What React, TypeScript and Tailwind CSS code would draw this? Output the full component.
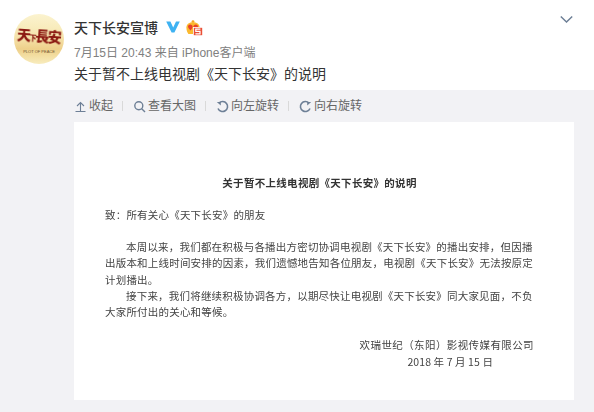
const Cjk = '[font-family:"Liberation_Sans","Noto_Sans_CJK_SC",sans-serif]';

function Avatar() {
  return (
    <div className="relative w-[50px] h-[50px] rounded-full overflow-hidden shrink-0 bg-[linear-gradient(180deg,#fbf3cf_0%,#f8ecbc_28%,#f3dca0_55%,#eed08a_70%,#f3dea2_84%,#f8ecbe_100%)] flex flex-col items-center">
      <div className="mt-[14px] font-['Noto_Sans_CJK_SC',sans-serif] font-black text-[14px] leading-[15px] text-[#8c1a12] tracking-[-1.4px] whitespace-nowrap rotate-[4deg] blur-[0.3px]">
        天<span className="text-[7px]">下</span>長安
      </div>
      <div className="font-['Liberation_Sans',sans-serif] text-[4px] leading-[5px] text-[#6f5430] mt-[3px] whitespace-nowrap">PLOT OF PEACE</div>
    </div>
  );
}

function VBadge() {
  return (
    <svg width="14" height="12" viewBox="0 0 14 12" className="shrink-0">
      <path d="M0.2 0.4 H4.4 L7.2 6.6 L10 0.4 H13.8 L8.4 11.6 H5.6 Z" fill="#3eb2f2" />
    </svg>
  );
}

function Crown() {
  return (
    <svg width="17" height="16" viewBox="0 0 17 16" className="shrink-0">
      <circle cx="7" cy="1.6" r="1.4" fill="#f5a623" />
      <path d="M7 2.2 C10.5 2.2 13.6 4 13.6 7.4 C13.6 10 13 12 12 14 H2.4 C1 12 0.4 10 0.4 7.4 C0.4 4 3.5 2.2 7 2.2 Z" fill="#fbb92f" />
      <path d="M4.2 4.4 C2.8 4.4 2 5.4 2 6.6 C2 8 3.4 9.4 4.6 10.4 C5.6 9.4 6.6 8 6.6 6.6 C6.6 5.4 5.6 4.4 4.2 4.4 Z" fill="#e8402c" />
      <path d="M9.8 4.4 C8.4 4.4 7.4 5.4 7.4 6.6 C7.4 8 8.4 9.4 9.4 10.4 C10.6 9.4 12 8 12 6.6 C12 5.4 11.2 4.4 9.8 4.4 Z" fill="#e8402c" />
      <rect x="7" y="7" width="10" height="9" fill="#fff" />
      <rect x="7.8" y="7.8" width="8.4" height="7.4" fill="#ea4f36" />
      <path d="M14.4 9.2 H9.8 V11.3 H14 V13.8 H9.4" fill="none" stroke="#fff" strokeWidth="1.2" />
    </svg>
  );
}

function Sep() {
  return <span className="w-px h-[10px] bg-[#d9d9d9] ml-[9px] mr-[10px]" />;
}

function ToolItem({ icon, label }: { icon: React.ReactNode; label: string }) {
  return (
    <div className="flex items-center gap-[2px] text-[12px] text-[#666]">
      {icon}
      <span>{label}</span>
    </div>
  );
}

const stroke = { fill: "none", stroke: "#6d7f96", strokeWidth: 1.4 };

export default function App() {
  return (
    <div className={`w-[594px] h-[412px] overflow-hidden bg-white ${Cjk}`}>
      <div className="h-[90px] flex pl-[14px] pr-[21px] pt-[14px]">
        <Avatar />
        <div className="ml-[10px] flex-1 flex flex-col">
          <div className="flex items-center h-[20px] mt-[4px]">
            <span className="text-[14px] font-medium text-[#333] leading-[20px]">天下长安宣博</span>
            <span className="ml-[8px] -mt-[2px]"><VBadge /></span>
            <span className="ml-[6px] -mt-[1px]"><Crown /></span>
          </div>
          <div className="mt-[7px] text-[12px] leading-[17px] text-[#808080]">7月15日 20:43 来自 iPhone客户端</div>
          <div className="mt-[2px] text-[14px] leading-[20px] text-[#333]">关于暂不上线电视剧《天下长安》的说明</div>
        </div>
        <svg width="13" height="9" viewBox="0 0 13 9" className="mt-[1px] shrink-0">
          <path d="M0.8 1.5 L6.5 7 L12.2 1.5" fill="none" stroke="#6d7f96" strokeWidth="1.5" />
        </svg>
      </div>
      <div className="h-[322px] bg-[#f2f2f5] pl-[74px] pr-[20px]">
        <div className="h-[32px] flex items-center">
          <ToolItem
            label="收起"
            icon={
              <svg width="13" height="13" viewBox="0 0 13 13">
                <path d="M6.5 11 V3 M3 6 L6.5 2.5 L10 6 M1.5 11.5 H11.5" {...stroke} strokeWidth={1.1} />
              </svg>
            }
          />
          <Sep />
          <ToolItem
            label="查看大图"
            icon={
              <svg width="13" height="13" viewBox="0 0 13 13">
                <circle cx="5.8" cy="5.8" r="4" {...stroke} />
                <path d="M8.7 8.7 L12 12" {...stroke} />
              </svg>
            }
          />
          <Sep />
          <ToolItem
            label="向左旋转"
            icon={
              <svg width="13" height="13" viewBox="0 0 13 13">
                <path d="M3 3 A5 5 0 1 1 2 8.5" {...stroke} strokeWidth={1.6} />
                <path d="M0.8 2 H4.8 V5.6 Z" fill="#6d7f96" />
              </svg>
            }
          />
          <Sep />
          <ToolItem
            label="向右旋转"
            icon={
              <svg width="13" height="13" viewBox="0 0 13 13">
                <path d="M10 3 A5 5 0 1 0 11 8.5" {...stroke} strokeWidth={1.6} />
                <path d="M12.2 2 H8.2 V5.6 Z" fill="#6d7f96" />
              </svg>
            }
          />
        </div>
        <div className="w-[500px] h-[278px] bg-white px-[31px] pt-[53px] text-[10.5px] text-[#444] blur-[0.35px] font-['Noto_Sans_CJK_SC',sans-serif]">
          <div className="text-center font-bold leading-[16px] tracking-[0.3px] text-[#333] pr-[9px]">关于暂不上线电视剧《天下长安》的说明</div>
          <div className="mt-[16px] leading-[16px] tracking-[0.2px]">致：所有关心《天下长安》的朋友</div>
          <div className="mt-[16px] leading-[16.3px] tracking-[0.2px] w-[430px]">
            <p className="indent-[21px]">本周以来，我们都在积极与各播出方密切协调电视剧《天下长安》的播出安排，但因播出版本和上线时间安排的因素，我们遗憾地告知各位朋友，电视剧《天下长安》无法按原定计划播出。</p>
            <p className="indent-[21px]">接下来，我们将继续积极协调各方，以期尽快让电视剧《天下长安》同大家见面，不负大家所付出的关心和等候。</p>
          </div>
          <div className="mt-[17px] leading-[16.5px] tracking-[0.4px] text-right w-[429px]">
            <div>欢瑞世纪（东阳）影视传媒有限公司</div>
            <div className="pr-[41px] tracking-[0.1px]">2018 年 7 月 15 日</div>
          </div>
        </div>
      </div>
    </div>
  );
}
